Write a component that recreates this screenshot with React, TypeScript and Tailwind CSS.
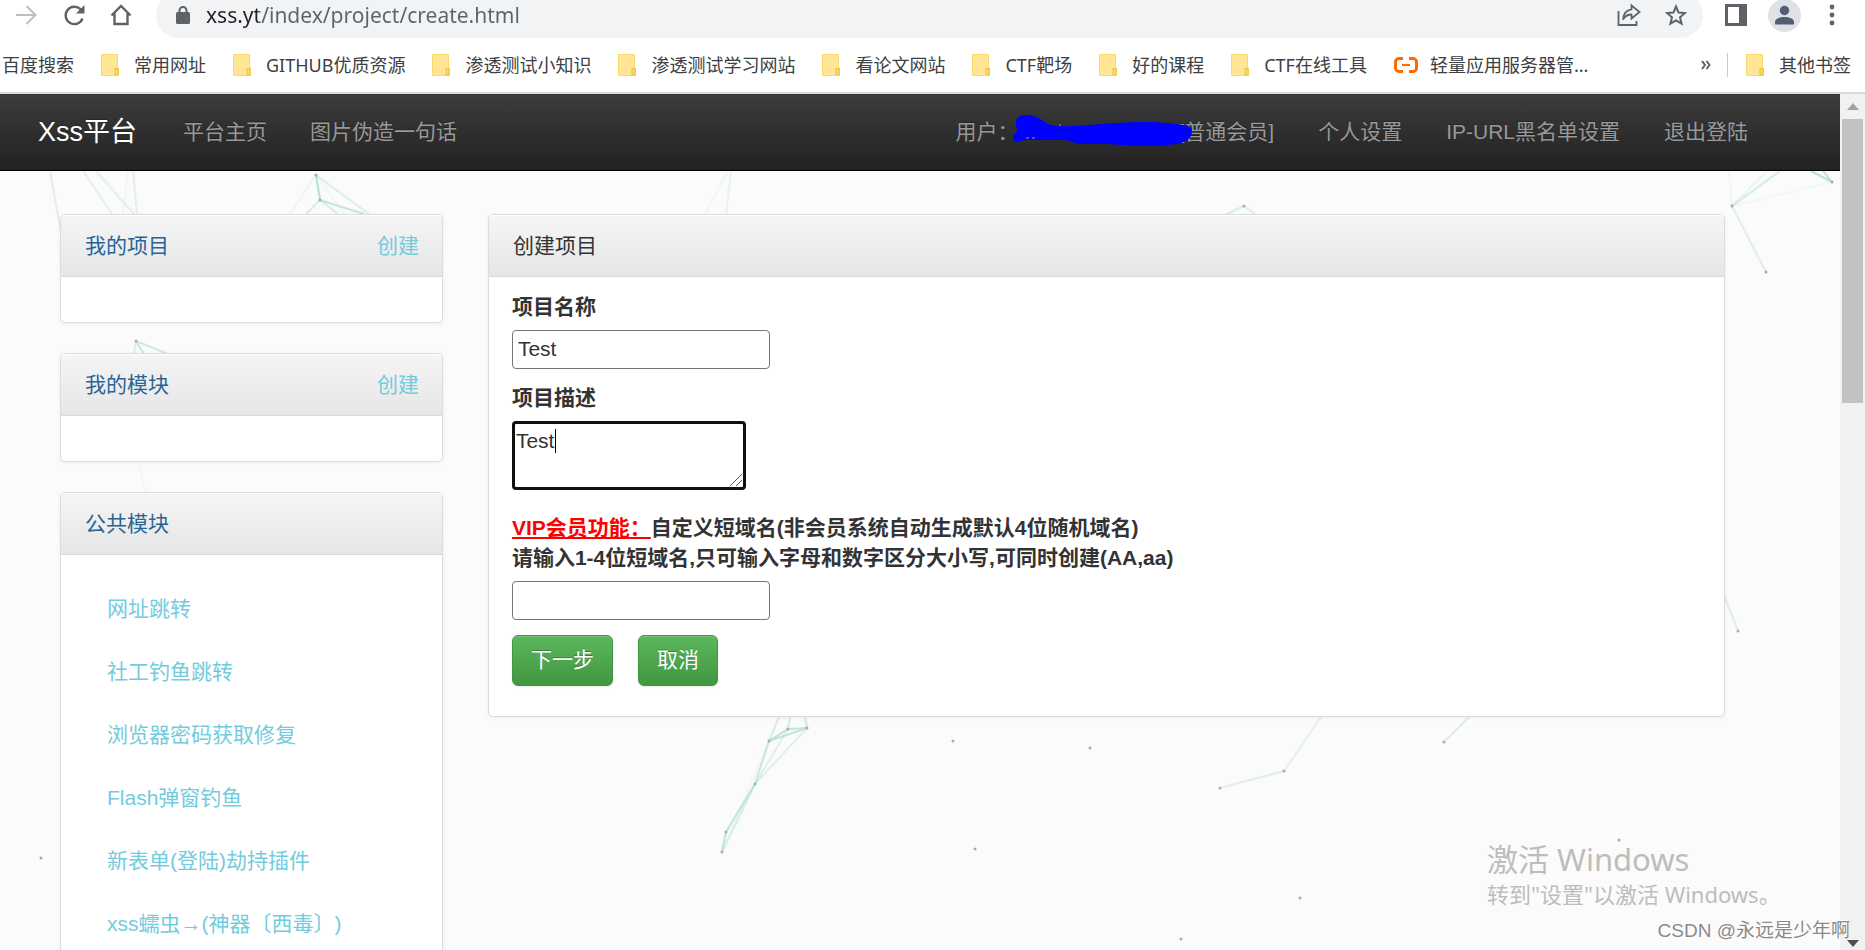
import type { ReactNode } from "react";

const BOOKMARKS = ["常用网址", "GITHUB优质资源", "渗透测试小知识", "渗透测试学习网站", "看论文网站", "CTF靶场", "好的课程", "CTF在线工具"];

const MODULES = ["网址跳转", "社工钓鱼跳转", "浏览器密码获取修复", "Flash弹窗钓鱼", "新表单(登陆)劫持插件", "xss蠕虫→(神器〔西毒〕)"];

// x1, y1, x2, y2, opacity
const LINES = [
  [50, 171, 61, 232, 0.35],
  [83, 171, 112, 214, 0.35],
  [96, 171, 134, 214, 0.35],
  [128, 171, 123, 214, 0.15],
  [133, 171, 137, 214, 0.35],
  [316, 175, 320, 200, 0.9],
  [316, 175, 290, 214, 0.2],
  [316, 175, 369, 214, 0.4],
  [316, 175, 344, 214, 0.12],
  [320, 200, 306, 214, 0.5],
  [320, 200, 338, 214, 0.5],
  [320, 200, 364, 214, 0.8],
  [136, 341, 134, 354, 0.4],
  [136, 341, 144, 354, 0.7],
  [136, 341, 168, 354, 0.6],
  [139, 463, 145, 493, 0.12],
  [728, 171, 705, 214, 0.15],
  [731, 171, 726, 214, 0.25],
  [1244, 206, 1227, 214, 0.5],
  [1244, 206, 1255, 214, 0.4],
  [1832, 182, 1811, 171, 0.9],
  [1832, 182, 1823, 171, 0.8],
  [1732, 206, 1780, 171, 0.5],
  [1732, 206, 1767, 171, 0.2],
  [1732, 206, 1729, 171, 0.15],
  [1732, 206, 1832, 182, 0.12],
  [1732, 206, 1766, 272, 0.4],
  [1722, 590, 1738, 631, 0.4],
  [1472, 714, 1444, 742, 0.45],
  [779, 717, 769, 741, 0.5],
  [790, 717, 788, 729, 0.5],
  [805, 717, 807, 728, 0.6],
  [788, 729, 807, 728, 0.8],
  [788, 729, 769, 741, 0.8],
  [807, 728, 769, 741, 0.8],
  [769, 741, 755, 784, 0.7],
  [788, 729, 755, 784, 0.4],
  [807, 728, 755, 784, 0.35],
  [769, 741, 730, 832, 0.12],
  [755, 784, 726, 832, 0.8],
  [755, 784, 722, 852, 0.5],
  [726, 832, 722, 852, 0.8],
  [1321, 717, 1284, 771, 0.35],
  [1284, 771, 1220, 788, 0.4],
];

const DOTS = [
  [316, 175], [320, 200], [136, 341], [41, 858], [1244, 206], [1832, 182], [1732, 206], [1766, 272],
  [1738, 631], [1444, 742], [788, 729], [807, 728], [769, 741], [755, 784], [726, 832], [722, 852],
  [953, 741], [1090, 748], [975, 849], [1300, 898], [1181, 939], [1284, 771], [1220, 788], [1619, 840],
];

function Folder() {
  return (
    <svg width="18" height="22" viewBox="0 0 18 22" className="shrink-0">
      <path d="M.5.500h16V14h1v7.500H.5z" fill="#ffe595" stroke="#fbdb68" />
      <path d="M14 21v-6.500h3V21z" fill="#fbdc6e" stroke="#e8c23f" />
    </svg>
  );
}

function Network() {
  return (
    <svg className="absolute inset-0 h-full w-full" viewBox="0 171 1840 779" preserveAspectRatio="xMinYMin slice">
      {LINES.map(([x1, y1, x2, y2, o], i) => (
        <line key={i} x1={x1} y1={y1} x2={x2} y2={y2} stroke="#b4e2cc" strokeWidth="2.200" opacity={o} />
      ))}
      {DOTS.map(([x, y], i) => (
        <circle key={i} cx={x} cy={y} r="1.500" fill="#9fb3a9" />
      ))}
    </svg>
  );
}

function Panel({ title, children }: { title: ReactNode; children: ReactNode }) {
  return (
    <section className="overflow-hidden rounded-[5px] border border-[#dcdcdc] bg-white shadow-[0_1px_4px_rgba(0,0,0,0.06)]">
      <div className="flex h-[62px] items-center justify-between border-b border-[#d9d9d9] bg-linear-to-b from-[#f5f5f5] to-[#e6e6e6] pl-6 pr-[23px] shadow-[inset_0_1px_0_#fff]">
        {title}
      </div>
      {children}
    </section>
  );
}

function BrowserBar() {
  return (
    <div className="shrink-0 overflow-hidden border-b-2 border-[#dadada] bg-white font-['Noto_Sans','Noto_Sans_CJK_SC',sans-serif] text-[#3c4043]">
      <div className="-mt-2 flex h-[46px] items-center pl-[14px] pr-[30px]">
        <button aria-label="前进" className="mr-6">
          <svg width="24" height="24" viewBox="0 0 24 24" fill="none" stroke="#bcbec1" strokeWidth="2">
            <path d="M2 12h19M12.500 3l9 9-9 9" />
          </svg>
        </button>
        <button aria-label="重新加载" className="mr-6">
          <svg width="24" height="24" viewBox="0 0 24 24">
            <path d="M20.500 15.500A8.700 8.700 0 1 1 18.500 6.200l2 2.300" fill="none" stroke="#5f6368" strokeWidth="2.400" />
            <path d="M22.500 2v8.500H14z" fill="#5f6368" />
          </svg>
        </button>
        <button aria-label="主页">
          <svg width="22" height="24" viewBox="0 0 22 24" fill="none" stroke="#5f6368" strokeWidth="2.400">
            <path d="M1.500 12.500 11 3l9.500 9.500M4.500 10v11h13V10" />
          </svg>
        </button>
        <div className="ml-6 flex h-full flex-1 items-center rounded-full bg-[#f1f3f4] pl-5 pr-4">
          <svg width="14" height="18" viewBox="0 0 14 18" className="mr-4">
            <rect x="0" y="6" width="14" height="12" rx="1.500" fill="#5f6368" />
            <path d="M3.500 7V4.500a3.500 3.500 0 0 1 7 0V7" fill="none" stroke="#5f6368" strokeWidth="2" />
          </svg>
          <input
            aria-label="地址栏"
            defaultValue="xss.yt/index/project/create.html"
            className="min-w-0 flex-1 bg-[linear-gradient(to_right,#202124_52px,#5f6368_52px)] bg-clip-text pt-[2px] text-[21px] text-transparent outline-none"
          />
          <button aria-label="分享" className="mr-6">
            <svg width="24" height="24" viewBox="0 0 24 24" fill="none" stroke="#5f6368" strokeWidth="1.800">
              <path d="M1.500 8v14h18v-4" />
              <path d="M14.500 2.500 22.500 9l-8 6.500v-4c-4 0-6.500 1.500-8.500 5 .5-6 3.500-9.500 8.500-10.200z" />
            </svg>
          </button>
          <button aria-label="收藏">
            <svg width="22" height="22" viewBox="0 0 22 22" fill="none" stroke="#5f6368" strokeWidth="2">
              <path d="m11 2.500 2.500 6 6.500.5-5 4.300 1.600 6.400L11 16.300l-5.600 3.400L7 13.300 2 9l6.500-.5z" />
            </svg>
          </button>
        </div>
        <button aria-label="侧边栏" className="ml-[22px]">
          <svg width="22" height="22" viewBox="0 0 22 22">
            <path d="M0 0h22v22H0z" fill="#5f6368" />
            <path d="M3 3h11v16H3z" fill="#fff" />
          </svg>
        </button>
        <button aria-label="用户" className="ml-[21px]">
          <svg width="33" height="33" viewBox="0 0 33 33">
            <circle cx="16.500" cy="16.500" r="16.500" fill="#dee1e6" />
            <circle cx="16.500" cy="11.500" r="4.700" fill="#535e75" />
            <path d="M7 25.500v-2.500c0-3.500 5-5 9.500-5s9.500 1.500 9.500 5v2.500z" fill="#535e75" />
          </svg>
        </button>
        <button aria-label="菜单" className="ml-7">
          <svg width="6" height="22" viewBox="0 0 6 22" fill="#5f6368">
            <circle cx="3" cy="3" r="2.400" />
            <circle cx="3" cy="11" r="2.400" />
            <circle cx="3" cy="19" r="2.400" />
          </svg>
        </button>
      </div>
      <div className="flex h-[54px] items-center gap-[27px] whitespace-nowrap pl-[2px] pr-[14px] text-[18px]">
        <a href="#">百度搜索</a>
        {BOOKMARKS.map((b) => (
          <a key={b} href="#" className="flex items-center gap-[15px]">
            <Folder />
            {b}
          </a>
        ))}
        <a href="#" className="flex items-center gap-3">
          <svg width="24" height="16" viewBox="0 0 24 16" fill="none" stroke="#ff6a00" strokeWidth="3">
            <path d="M9 1.500H5A3.500 3.500 0 0 0 1.500 5v6A3.500 3.500 0 0 0 5 14.500h4M15 1.500h4A3.500 3.500 0 0 1 22.500 5v6a3.500 3.500 0 0 1-3.500 3.500h-4" />
            <path d="M8 8h8" strokeWidth="2" />
          </svg>
          轻量应用服务器管...
        </a>
        <div className="ml-auto flex items-center">
          <button aria-label="更多书签" className="mr-4">
            <svg width="10" height="10" viewBox="0 0 10 10" fill="none" stroke="#5f6368" strokeWidth="2">
              <path d="m1 1 3 4-3 4M5.500 1l3 4-3 4" />
            </svg>
          </button>
          <div className="mr-[18px] h-6 w-px bg-[#c8cacd]" />
          <a href="#" className="flex items-center gap-[15px]">
            <Folder />
            其他书签
          </a>
        </div>
      </div>
    </div>
  );
}

function Navbar() {
  return (
    <nav className="flex h-[77px] shrink-0 items-center border-b border-black bg-linear-to-b from-[#3c3c3c] to-[#222] pl-[38px] pr-[92px] text-[#999] [text-shadow:0_-1px_0_rgba(0,0,0,0.25)]">
      <a href="#" className="mr-[46px] text-[27px] text-white">Xss平台</a>
      <div className="flex gap-[43px]">
        <a href="#">平台主页</a>
        <a href="#">图片伪造一句话</a>
      </div>
      <div className="ml-auto flex gap-[44px]">
        <a href="#" className="relative flex">
          用户：
          <span className="w-[160px]" />
          [普通会员]
          <svg className="absolute -top-[3px] left-[58px]" width="180" height="34" viewBox="1012 114 180 34">
            <path
              d="M1015 123c0-6 4-8 9-8 13 0 17 6 25 10 9 2 17 1 26 1l39-3c20-1 40-2 60 1 8 1 17 1 17 7 0 5-3 11-15 13-14 2-28 2-42 2l-28-2h-27c-7-1-10-4-16-4h-38c-4 0-5 2-8 2-7 0-6-8 0-11-2-3-2-5-2-8z"
              fill="#00f"
            />
            <path d="M1059 124v2M1025 138h3M1031 138h3" stroke="#999" />
          </svg>
        </a>
        <a href="#">个人设置</a>
        <a href="#">IP-URL黑名单设置</a>
        <a href="#">退出登陆</a>
      </div>
    </nav>
  );
}

function ProjectForm() {
  return (
    <form className="flex flex-col items-start px-[23px] pb-[30px] pt-[15px]" onSubmit={(e) => e.preventDefault()}>
      <label htmlFor="name" className="mb-2 font-bold">项目名称</label>
      <input id="name" defaultValue="Test" className="mb-[14px] h-[39px] w-[258px] rounded-[4px] border border-[#767676] px-[5px] pb-[2px] outline-none" />
      <label htmlFor="desc" className="mb-2 font-bold">项目描述</label>
      <div className="relative mb-[23px] h-[69px] w-[234px]">
        <textarea
          id="desc"
          defaultValue="Test"
          className="h-full w-full resize-none rounded-[4px] border-3 border-[#101010] px-px py-[2px] caret-transparent outline-none"
        />
        <span className="absolute left-[43px] top-2 h-6 w-px bg-black" />
        <svg className="absolute bottom-1 right-1" width="12" height="12" viewBox="0 0 12 12" stroke="#555">
          <path d="M0 12 12 0M6 12l6-6" />
        </svg>
      </div>
      <label htmlFor="domain" className="mb-2 font-bold">
        <span className="text-[#f00] underline">VIP会员功能：</span>自定义短域名(非会员系统自动生成默认4位随机域名)
        <br />
        请输入1-4位短域名,只可输入字母和数字区分大小写,可同时创建(AA,aa)
      </label>
      <input id="domain" className="mb-[15px] h-[39px] w-[258px] rounded-[4px] border border-[#767676] px-[5px] outline-none" />
      <div className="flex gap-[25px]">
        {["下一步", "取消"].map((t) => (
          <button
            key={t}
            className="h-[51px] rounded-[6px] border border-[#419641] bg-linear-to-b from-[#5cb85c] to-[#419641] px-[18px] pb-[2px] text-white shadow-[inset_0_1px_0_rgba(255,255,255,0.2),0_1px_2px_rgba(0,0,0,0.1)] [text-shadow:0_-1px_0_rgba(0,0,0,0.25)]"
          >
            {t}
          </button>
        ))}
      </div>
    </form>
  );
}

export default function App() {
  return (
    <div className="relative flex h-screen flex-col overflow-hidden">
      <BrowserBar />
      <div className="flex min-h-0 flex-1 font-['Liberation_Sans','Noto_Sans_CJK_SC',sans-serif] text-[21px] leading-[30px] text-[#333]">
        <div className="flex min-w-0 flex-1 flex-col">
          <Navbar />
          <main className="relative min-h-0 flex-1 overflow-hidden bg-[#fbfbfb]">
            <Network />
            <div className="relative flex items-start gap-[45px] pl-[60px] pr-[115px] pt-[43px]">
              <aside className="flex w-[23%] shrink-0 flex-col gap-[30px]">
                {["我的项目", "我的模块"].map((t) => (
                  <Panel
                    key={t}
                    title={
                      <>
                        <h2 className="text-[#2a6496]">{t}</h2>
                        <a href="#" className="text-[#73cbdd]">创建</a>
                      </>
                    }
                  >
                    <div className="h-[45px]" />
                  </Panel>
                ))}
                <Panel title={<h2 className="text-[#2a6496]">公共模块</h2>}>
                  <ul className="px-[46px] py-[22px] [text-spacing-trim:space-all]">
                    {MODULES.map((m) => (
                      <li key={m} className="flex h-[63px] items-center">
                        <a href="#" className="text-[#73cbdd]">{m}</a>
                      </li>
                    ))}
                  </ul>
                </Panel>
              </aside>
              <div className="min-w-0 flex-1">
                <Panel title={<h2>创建项目</h2>}>
                  <ProjectForm />
                </Panel>
              </div>
            </div>
          </main>
        </div>
        <div className="flex w-[25px] shrink-0 flex-col items-center bg-[#f1f1f1]">
          <div className="flex h-[25px] items-center">
            <svg width="12" height="7" viewBox="0 0 12 7">
              <path d="M0 7 6 0l6 7z" fill="#a3a3a3" />
            </svg>
          </div>
          <div className="h-[284px] w-[21px] bg-[#c1c1c1]" />
          <svg width="12" height="7" viewBox="0 0 12 7" className="mb-[3px] mt-auto">
            <path d="M0 0h12L6 7z" fill="#505050" />
          </svg>
        </div>
      </div>
      <div className="absolute bottom-[40px] right-[90px] w-[288px] whitespace-nowrap font-['Noto_Sans','Noto_Sans_CJK_SC',sans-serif] text-[#bdbdbd]">
        <p className="text-[31px] leading-[38px]">激活 Windows</p>
        <p className="text-[22px] leading-[32px]">转到"设置"以激活 Windows。</p>
      </div>
      <p className="absolute bottom-1 right-[15px] font-['Liberation_Sans','Noto_Sans_CJK_SC',sans-serif] text-[19px] leading-[30px] text-[#8a8a8a] [text-shadow:-1px_-1px_0_#fff]">
        CSDN @永远是少年啊
      </p>
    </div>
  );
}
